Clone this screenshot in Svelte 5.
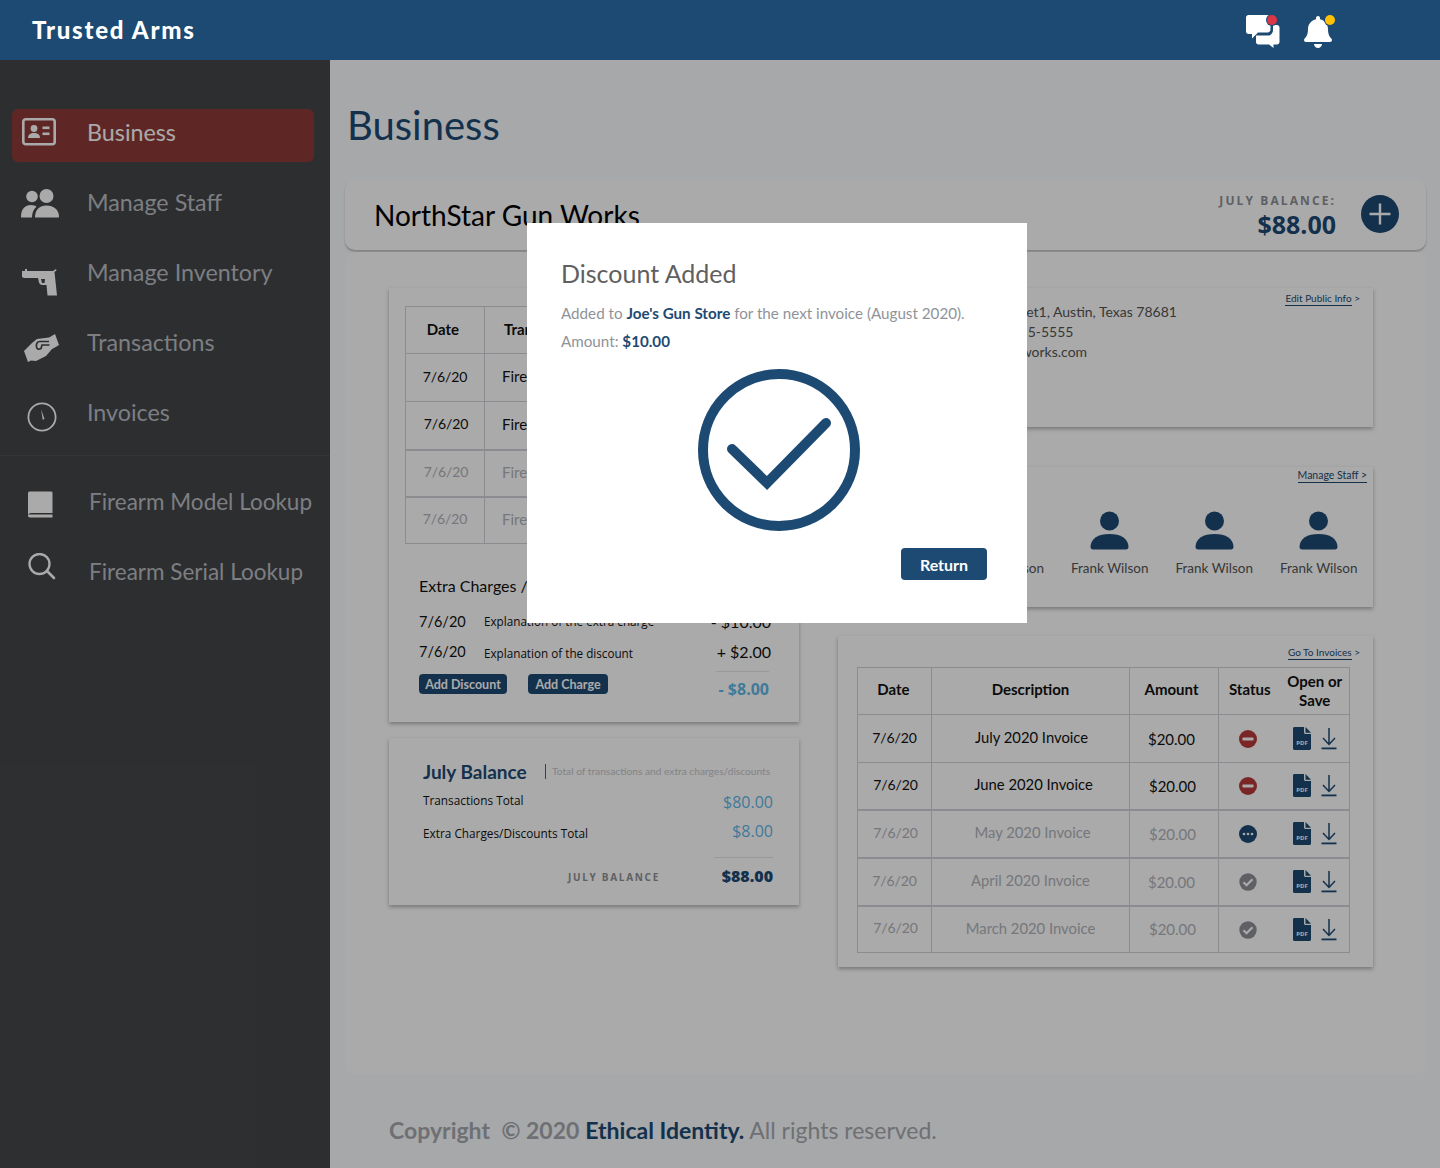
<script>
  const nav = [
    { label: 'Business', icon: 'card', active: true },
    { label: 'Manage Staff', icon: 'users' },
    { label: 'Manage Inventory', icon: 'gun' },
    { label: 'Transactions', icon: 'hands' },
    { label: 'Invoices', icon: 'clock' }
  ];
  const lookup = [
    { label: 'Firearm Model Lookup', icon: 'book' },
    { label: 'Firearm Serial Lookup', icon: 'search' }
  ];
  const tx = [
    { dx: 0, faded: false, thick: false },
    { dx: 2, faded: false, thick: false },
    { dx: 2, faded: true, thick: true },
    { dx: 0, faded: true, thick: true }
  ];
  const invoices = [
    { name: 'July 2020 Invoice', status: 'due', dd: 0, dn: 2, faded: false, thick: false },
    { name: 'June 2020 Invoice', status: 'due', dd: 2, dn: 6, faded: false, thick: false },
    { name: 'May 2020 Invoice', status: 'pending', dd: 2, dn: 4, faded: true, thick: true },
    { name: 'April 2020 Invoice', status: 'paid', dd: 0, dn: 0, faded: true, thick: true },
    { name: 'March 2020 Invoice', status: 'paid', dd: 2, dn: -4, faded: true, thick: true }
  ];
  const staff = [1, 2, 3, 4, 5];
</script>

{#snippet navIcon(kind)}
  {#if kind === 'card'}
    <svg class="ni i-card" viewBox="0 0 34 28"><rect x="1.300" y="1.300" width="31.400" height="25" rx="2.500" fill="none" stroke="#fff" stroke-width="2.600"/><circle cx="12" cy="10.500" r="3.400" fill="#fff"/><path d="M6 20c0-3.600 2.600-5 6-5s6 1.400 6 5z" fill="#fff"/><rect x="20.500" y="8.500" width="7" height="2.600" fill="#fff"/><rect x="20.500" y="14.500" width="7" height="2.600" fill="#fff"/></svg>
  {:else if kind === 'users'}
    <svg class="ni i-users" viewBox="0 0 38 30"><circle cx="11" cy="7.500" r="5.800" fill="#fff"/><circle cx="25.500" cy="7" r="7" fill="#fff"/><path d="M0 28c0-8 4-12 10-12 2.500 0 4.500.8 5.500 1.800C12.500 20 11 24 11 28.600H1.500C.5 28.600 0 28.400 0 28z" fill="#fff"/><path d="M14 28.600c0-8 4.500-12 11.500-12S38 20.600 38 28c0 .4-.6.6-1.500.6z" fill="#fff"/></svg>
  {:else if kind === 'gun'}
    <svg class="ni i-gun" viewBox="0 0 36 28"><path d="M0 3h3V1h2v2h26l3-2 .5 1.500-2 1.500L35 27.500H25.500L24.500 17h-4c-2 0-3-1-3.500-2.500L16 10H2L0 9z" fill="#fff"/><path d="M19 11h4l-.5 4H20z" fill="#444649"/></svg>
  {:else if kind === 'hands'}
    <svg class="ni i-hands" viewBox="0 0 35 28"><path d="M0 17L8 9l5-4 12-1.500L26 3l5-3 4 11-5 3-2 1-6 7-10 5-5-.5L4 28z" fill="#fff"/><path d="M25 7.500h-9c-3 0-4 2.500-3.500 5.500.5 2.500 2.500 2.500 4.500 1.500l1-3.500h7.500" fill="none" stroke="#444649" stroke-width="1.700"/></svg>
  {:else if kind === 'clock'}
    <svg class="ni i-clock" viewBox="0 0 30 30"><circle cx="15" cy="15" r="13.600" fill="none" stroke="#fff" stroke-width="1.800"/><path d="M14.200 7.500l3.300 9.500-1.800.8z" fill="#fff"/></svg>
  {:else if kind === 'book'}
    <svg class="ni i-book" viewBox="0 0 28 28"><path d="M2.500.5H24c1 0 1.500.5 1.500 1.500v20H4.500c-1.200 0-2 .4-2.600 1L1 24V2.500C1 1.200 1.500.5 2.500.5z" fill="#fff"/><path d="M1 24.500c0-.6.800-1 2-1h22.500v3H3.500C2 26.500 1 26 1 24.500z" fill="#fff"/></svg>
  {:else}
    <svg class="ni i-search" viewBox="0 0 28 28"><circle cx="11.500" cy="11" r="10" fill="none" stroke="#fff" stroke-width="2.300"/><path d="M19 18l7 7" stroke="#fff" stroke-width="2.600" stroke-linecap="round"/></svg>
  {/if}
{/snippet}

{#snippet statusIcon(s)}
  <svg class="st" viewBox="0 0 18 18">
    {#if s === 'due'}
      <circle cx="9" cy="9" r="9" fill="#b83a3a"/><rect x="3.500" y="7.600" width="11" height="2.800" rx=".6" fill="#fff"/>
    {:else if s === 'pending'}
      <circle cx="9" cy="9" r="9" fill="#1d4a73"/><circle cx="5" cy="9" r="1.300" fill="#fff"/><circle cx="9" cy="9" r="1.300" fill="#fff"/><circle cx="13" cy="9" r="1.300" fill="#fff"/>
    {:else}
      <circle cx="9" cy="9" r="8.700" fill="#8d9096"/><path d="M4.500 9.200l3 3 6-6" fill="none" stroke="#fff" stroke-width="2.300"/>
    {/if}
  </svg>
{/snippet}

{#snippet fileIcons()}
  <div class="files">
    <svg class="pdf" viewBox="0 0 18 23"><path d="M1.500 0H11v5.500c0 .8.700 1.500 1.500 1.500H18v14.500c0 .8-.7 1.500-1.500 1.500h-15C.7 23 0 22.300 0 21.500v-20C0 .7.700 0 1.500 0z" fill="#1d4a73"/><path d="M12.500 0L18 5.700h-5.500z" fill="#1d4a73"/><text x="9" y="18" class="pdft">PDF</text></svg>
    <svg class="dl" viewBox="0 0 16 23"><path d="M8 1v16M2 11l6 6.500 6-6.500" fill="none" stroke="#1d4a73" stroke-width="1.500"/><rect x="0.500" y="20.500" width="15" height="1.800" fill="#1d4a73"/></svg>
  </div>
{/snippet}

<div class="root">
  <header class="top">
    <div class="brand">Trusted Arms</div>
    <div class="top-icons">
      <div class="ti chat">
        <svg viewBox="0 0 34 33" width="34" height="33"><path d="M2.500 0H22c1.400 0 2.500 1.100 2.500 2.500V14c0 2-1 3.500-3 3.500H12l-6 6V19H2.500C1.100 19 0 17.900 0 16.500V2.500C0 1.100 1.100 0 2.500 0z" fill="#fff"/><path d="M27 10h4c1.400 0 2.500 1.100 2.500 2.500V27c0 1.400-1.100 2.500-2.500 2.500h-3.500V33L23 29.500H12.500C11 29.500 10 28.400 10 27v-6.500h12c3 0 5-2.500 5-5.500z" fill="#fff"/></svg>
        <span class="dot red"></span>
      </div>
      <div class="ti bell">
        <svg viewBox="0 0 448 512" width="30" height="32"><path fill="#fff" d="M224 512c35.320 0 63.970-28.650 63.970-64H160.030c0 35.350 28.650 64 63.970 64zm215.390-149.710c-19.320-20.760-55.470-51.990-55.470-154.290 0-77.700-54.480-139.900-127.940-155.160V32c0-17.670-14.320-32-31.980-32s-31.980 14.330-31.980 32v20.840C118.560 68.100 64.080 130.300 64.080 208c0 102.300-36.150 133.530-55.470 154.290-6 6.450-8.660 14.160-8.610 21.710.11 16.400 12.980 32 32.100 32h383.800c19.120 0 32-15.600 32.100-32 .05-7.550-2.610-15.270-8.610-21.710z"/></svg>
        <span class="dot amber"></span>
      </div>
    </div>
  </header>

  <div class="shell">
    <aside class="side">
      <nav class="nav-main">
        {#each nav as n}
          <div class="nav-item" class:active={n.active}>
            <span class="nav-ico">{@render navIcon(n.icon)}</span>
            <span class="nav-label">{n.label}</span>
          </div>
        {/each}
      </nav>
      <nav class="nav-look">
        {#each lookup as n}
          <div class="nav-item look">
            <span class="nav-ico">{@render navIcon(n.icon)}</span>
            <span class="nav-label">{n.label}</span>
          </div>
        {/each}
      </nav>
    </aside>

    <main class="main">
      <h1 class="title">Business</h1>
      <section class="biz-head">
        <h2 class="biz-name">NorthStar Gun Works</h2>
        <div class="biz-bal">
          <div class="bal-cap">JULY BALANCE:</div>
          <div class="bal-val">$88.00</div>
        </div>
        <div class="plus"><svg viewBox="0 0 38 38" width="38" height="38"><circle cx="19" cy="19" r="19" fill="#1d4a73"/><path d="M19 8.500v21M8.500 19h21" stroke="#fff" stroke-width="2.400"/></svg></div>
      </section>

      <section class="biz-body">
        <div class="col-left">
          <div class="card tx-card">
            <table class="grid tx-table">
              <colgroup><col class="c-d" /><col /></colgroup>
              <thead><tr><th>Date</th><th>Transaction</th></tr></thead>
              <tbody>
                {#each tx as r}
                  <tr class:faded={r.faded} class:thick={r.thick}>
                    <td class="dt" style="padding-left:{r.dx}px">7/6/20</td>
                    <td>Firearm Transfer</td>
                  </tr>
                {/each}
              </tbody>
            </table>
            <div class="extra-title">Extra Charges / Discounts</div>
            <div class="extra-row one"><span class="ex-date">7/6/20</span><span class="ex-desc">Explanation of the extra charge</span><span class="ex-amt">- $10.00</span></div>
            <div class="extra-row two"><span class="ex-date">7/6/20</span><span class="ex-desc">Explanation of the discount</span><span class="ex-amt">+ $2.00</span></div>
            <div class="extra-foot">
              <button class="mini">Add Discount</button>
              <button class="mini second">Add Charge</button>
              <div class="ex-total">- $8.00</div>
            </div>
          </div>
          <div class="card bal-card">
            <div class="bal-head">
              <span class="bal-title">July Balance</span>
              <span class="bal-note">Total of transactions and extra charges/discounts</span>
            </div>
            <div class="bal-row r1"><span>Transactions Total</span><b>$80.00</b></div>
            <div class="bal-row r2"><span>Extra Charges/Discounts Total</span><b>$8.00</b></div>
            <div class="bal-sum">
              <span class="sum-cap">JULY BALANCE</span>
              <span class="sum-val">$88.00</span>
            </div>
          </div>
        </div>

        <div class="col-right">
          <div class="card info-card">
            <a class="lnk" href="#top"><span class="u">Edit Public Info</span> &gt;</a>
            <div class="info-lines">
              <div>2 Street1, Austin, Texas 78681</div>
              <div>55-555-5555</div>
              <div>ngunworks.com</div>
            </div>
          </div>
          <div class="card staff-card">
            <a class="lnk" href="#top"><span class="u">Manage Staff &gt;</span></a>
            <div class="staff-row">
              {#each staff as s}
                <div class="person">
                  <svg viewBox="0 0 39 39" width="39" height="39"><circle cx="19.500" cy="10" r="9.500" fill="#1d4a73"/><path d="M0.500 36c0-8.500 8-13 19-13s19 4.500 19 13c0 1.600-1 2.500-2.500 2.500H3C1.500 38.500.5 37.600.5 36z" fill="#1d4a73"/></svg>
                  <span>Frank Wilson</span>
                </div>
              {/each}
            </div>
          </div>
          <div class="card inv-card">
            <a class="lnk" href="#top"><span class="u">Go To Invoices</span> &gt;</a>
            <table class="grid inv-table">
              <colgroup><col class="i1"/><col class="i2"/><col class="i3"/><col class="i4"/><col class="i5"/></colgroup>
              <thead>
                <tr><th>Date</th><th>Description</th><th class="amt">Amount</th><th class="nr">Status</th><th class="nl">Open or<br/>Save</th></tr>
              </thead>
              <tbody>
                {#each invoices as r}
                  <tr class:faded={r.faded} class:thick={r.thick}>
                    <td class="dt" style="padding-left:{r.dd}px">7/6/20</td>
                    <td class="nm" style="padding-left:{r.dn}px">{r.name}</td>
                    <td class="amt" style="padding-left:{r.dd}px">$20.00</td>
                    <td class="nr icon-cell">{@render statusIcon(r.status)}</td>
                    <td class="nl icon-cell">{@render fileIcons()}</td>
                  </tr>
                {/each}
              </tbody>
            </table>
          </div>
        </div>
      </section>

      <footer class="foot"><b class="g">Copyright</b> <span class="s">&nbsp;© 2020</span> <b class="e">Ethical Identity.</b> <span class="r">All rights reserved.</span></footer>
    </main>
  </div>

  <div class="veil">
    <div class="modal">
      <h3>Discount Added</h3>
      <p class="l1">Added to <b>Joe's Gun Store</b> for the next invoice (August 2020).</p>
      <p class="l2">Amount: <b>$10.00</b></p>
      <div class="check">
        <svg viewBox="0 0 162 162" width="162" height="162"><circle cx="81" cy="81" r="76" fill="none" stroke="#1d4a73" stroke-width="10"/><path d="M34 80l35 34 59-60" fill="none" stroke="#1d4a73" stroke-width="10" stroke-linecap="round" stroke-linejoin="miter"/></svg>
      </div>
      <div class="m-foot"><button class="ret">Return</button></div>
    </div>
  </div>
</div>

<style>
  :global(body) { margin: 0; }
  .root { position: relative; width: 1440px; height: 1168px; overflow: hidden; font-family: Lato, "Open Sans", sans-serif; background: #fbfcfe; color: #111; }
  .top { position: relative; z-index: 3; height: 60px; background: #1c4a73; display: flex; align-items: center; justify-content: space-between; color: #fff; }
  .brand { margin-left: 32px; margin-top: -2px; font-size: 24px; font-weight: 900; letter-spacing: 1.75px; }
  .top-icons { display: flex; align-self: flex-start; margin-right: 107px; align-items: flex-start; }
  .ti { position: relative; }
  .chat { width: 34px; height: 33px; margin-right: 23px; margin-top: 15px; }
  .bell { width: 30px; height: 32px; margin-top: 16px; }
  .ti svg { display: block; }
  .dot { position: absolute; width: 10px; height: 10px; border-radius: 50%; }
  .dot.red { background: #dc3545; right: 3px; top: 0; box-shadow: 0 0 0 1px #1c4a73; }
  .dot.amber { background: #ffc107; right: -2px; top: -1px; box-shadow: 0 0 0 1px #1c4a73; }

  .shell { display: flex; height: 1108px; }
  .side { width: 330px; flex: none; background: #444649; padding-top: 49px; box-sizing: border-box; }
  .nav-main { padding: 0 16px 0 12px; border-bottom: 1.500px solid #4c5058; height: 346.500px; box-sizing: border-box; }
  .nav-item { display: flex; align-items: center; height: 53px; margin-bottom: 17px; color: #bcbec4; font-size: 23.300px; border-radius: 6px; }
  .nav-item.active { background: #8e3b38; color: #fff; }
  .nav-ico { width: 75px; flex: none; display: flex; align-items: center; padding-left: 9px; box-sizing: border-box; }
  .nav-label { padding-bottom: 7px; white-space: nowrap; }
  .ni { display: block; flex: none; }
  .i-card { width: 34px; height: 28px; margin: -8px 0 0 1px; }
  .i-users { width: 38px; height: 30px; margin: -4px 0 0 0; }
  .i-gun { width: 36px; height: 28px; margin: 13px 0 0 1px; }
  .i-hands { width: 35px; height: 28px; margin: 5px 0 0 3px; }
  .i-clock { width: 30px; height: 30px; margin: 2px 0 0 6px; }
  .i-book { width: 28px; height: 28px; margin: 0 0 0 6px; }
  .i-search { width: 28px; height: 28px; margin: -16px 0 0 7px; }
  .nav-look { padding: 22.500px 0 0 12px; }
  .look .nav-ico { width: 77px; }
  .look { font-size: 22.500px; }

  .main { flex: 1; min-width: 0; padding: 0 14px 0 15px; }
  .title { margin: 41px 0 0 2px; height: 79px; font-size: 40px; line-height: 48px; font-weight: 400; color: #1d4a73; }
  .biz-head { height: 70px; background: #fff; border-radius: 10px; box-shadow: 0 2px 2px rgba(0,0,0,.22); display: flex; align-items: center; padding: 0 27px 0 29px; }
  .biz-name { margin: 0; font-size: 28px; line-height: 34px; font-weight: 400; flex: 1; color: #000; padding-bottom: 1px; }
  .biz-bal { text-align: right; font-family: "Open Sans", sans-serif; margin-right: 25px; }
  .bal-cap { font-size: 12px; font-weight: 700; letter-spacing: 2.100px; color: #8e9096; line-height: 16px; margin-top: 2px; margin-bottom: 0; }
  .bal-val { font-size: 25px; font-weight: 700; color: #1d4a73; line-height: 31px; }
  .plus { height: 38px; margin-top: -2px; }

  .biz-body { margin-top: 2px; height: 822px; box-sizing: border-box; background: #fff; border-radius: 10px; padding: 36px 0 0 44px; display: flex; gap: 39px; }
  .col-left { width: 410px; flex: none; display: flex; flex-direction: column; gap: 16px; }
  .col-right { width: 535px; flex: none; display: flex; flex-direction: column; }
  .card { position: relative; background: #fff; box-shadow: 0 2px 4px rgba(0,0,0,.3); box-sizing: border-box; }

  .tx-card { height: 434px; padding: 18px 16px 0 16px; }
  .grid { border-collapse: collapse; table-layout: fixed; border: 1px solid #d0d3d9; font-size: 15px; text-align: center; }
  .grid th, .grid td { border: 1px solid #d0d3d9; padding: 0 0 3px; font-weight: 400; }
  .grid th { font-weight: 700; }
  .grid .dt { font-size: 14px; letter-spacing: -.1px; }
  .grid tr.thick td { border-top: 2px solid #d0d3d9; }
  .grid tr.faded td { color: #b1b3b9; }
  .grid .nr { border-right: 0; }
  .grid .nl { border-left: 0; }
  .tx-table { width: 378px; }
  .tx-table .c-d { width: 79px; }
  .tx-table thead tr { height: 47px; }
  .tx-table tbody tr { height: 48px; }
  .tx-table tbody tr.thick { height: 47px; }
  .tx-table th:first-child { padding-right: 4px; }
  .tx-table td:nth-child(2), .tx-table th:nth-child(2) { text-align: left; padding-left: 17px; }
  .tx-table th:nth-child(2) { padding-left: 19px; }

  .extra-title { margin: 32px 0 0 14px; font-size: 16px; line-height: 20px; }
  .extra-row { display: flex; margin-left: 14px; margin-right: 12px; align-items: center; height: 20px; }
  .extra-row.one { margin-top: 15px; }
  .extra-row.two { margin-top: 10px; }
  .ex-date { width: 65px; font-size: 14.500px; }
  .ex-desc { flex: 1; font-family: "Open Sans", sans-serif; font-size: 11.700px; }
  .two .ex-desc { padding-top: 3px; }
  .ex-amt { font-size: 16px; }
  .extra-foot { display: flex; align-items: center; margin: 8px 14px 0 14px; }
  .mini { height: 20px; border: 0; border-radius: 4px; background: #1d4a73; color: #fff; font: 700 12.500px Lato, sans-serif; padding: 0; width: 88px; }
  .mini.second { width: 80px; margin-left: 21px; }
  .ex-total { margin-left: auto; width: 53px; border-top: 1px solid #e6e6e6; text-align: right; font-family: "Open Sans", sans-serif; font-size: 16px; font-weight: 700; color: #5fb8e8; padding-top: 7px; margin-top: 2px; line-height: 20px; white-space: nowrap; }

  .bal-card { height: 167px; padding: 21px 26px 0 34px; }
  .bal-head { display: flex; align-items: center; height: 24px; }
  .bal-title { font-size: 19px; font-weight: 700; color: #1d4a73; width: 122px; }
  .bal-note { font-size: 10.200px; color: #c4c6ca; border-left: 1.500px solid #b83a3a; padding-left: 6px; line-height: 15px; margin-top: 1px; white-space: nowrap; }
  .bal-row { display: flex; justify-content: space-between; font-family: "Open Sans", sans-serif; font-size: 11.800px; align-items: center; height: 20px; }
  .bal-row.r1 { margin-top: 7px; }
  .bal-row.r2 { margin-top: 11px; }
  .bal-row.r1 b { padding-top: 3px; }
  .bal-row.r2 span { padding-top: 4px; }
  .bal-row b { font-weight: 400; font-size: 16px; color: #5fb8e8; }
  .bal-sum { display: flex; justify-content: flex-end; align-items: center; margin-top: 16px; font-family: "Open Sans", sans-serif; }
  .sum-cap { font-size: 10px; font-weight: 700; letter-spacing: 1.700px; color: #8e9096; margin-right: 54px; padding-top: 9px; }
  .sum-val { width: 59px; font-size: 16px; font-weight: 800; color: #1d4a73; text-align: right; border-top: 1px solid #e6e6e6; padding-top: 7px; line-height: 22px; }

  .lnk { position: absolute; top: 4px; right: 13px; font-size: 10px; line-height: 13px; color: #1d4a73; text-decoration: none; white-space: nowrap; }
  .lnk .u { border-bottom: 1px solid #1d4a73; display: inline-block; }
  .info-card { height: 139px; padding: 14px 0 0 152px; }
  .info-lines { font-size: 14px; line-height: 20px; color: #555; white-space: nowrap; }
  .staff-card { height: 140px; margin-top: 40px; display: flex; justify-content: flex-end; padding: 44px 2px 0 0; }
  .staff-card .lnk { right: 6px; top: 2px; font-size: 10.500px; }
  .staff-row { display: flex; }
  .person { width: 104.500px; display: flex; flex-direction: column; align-items: center; gap: 10px; font-size: 13.500px; color: #555; white-space: nowrap; }
  .person svg { display: block; }
  .inv-card { height: 331px; margin-top: 29px; padding: 31px 0 0 19px; }
  .inv-card .lnk { top: 10px; }
  .inv-table { width: 492px; }
  .i1 { width: 74px; } .i2 { width: 198px; } .i3 { width: 89px; } .i4 { width: 62px; } .i5 { width: 69px; }
  .inv-table thead tr { height: 47px; }
  .inv-table tbody tr { height: 48px; }
  .inv-table tbody tr:nth-child(2), .inv-table tbody tr:nth-child(5) { height: 47px; }
  .inv-table th { line-height: 19px; }
  .inv-table th:first-child { padding-right: 2px; }
  .inv-table th.nl { padding-bottom: 0; }
  .grid .nm { font-size: 14.800px; }
  .grid .amt { padding-right: 5px; }
  .grid td.amt { padding-bottom: 0; }
  .grid .icon-cell { vertical-align: middle; padding: 0; }
  .st { display: block; width: 18px; height: 18px; margin: 1px auto 0 20px; }
  .files { display: flex; gap: 10px; margin-left: 12px; align-items: center; }
  .pdf { width: 18px; height: 23px; display: block; }
  .dl { width: 16px; height: 23px; display: block; }
  .pdft { font: 700 6px "Open Sans", sans-serif; fill: #fff; text-anchor: middle; }

  .foot { margin: 42px 0 0 44px; font-size: 23px; line-height: 28px; color: #a6a9af; white-space: nowrap; }
  .foot .g { font-weight: 700; }
  .foot .s { font-weight: 700; }
  .foot .e { color: #1d4a73; font-weight: 700; }

  .veil { position: absolute; inset: 60px 0 0 0; z-index: 2; background: rgba(0,0,0,.335); padding: 163px 0 0 527px; box-sizing: border-box; }
  .modal { width: 500px; height: 400px; background: #fff; box-sizing: border-box; padding: 34px 40px 0 34px; }
  .modal h3 { margin: 0; font-size: 25px; line-height: 32px; font-weight: 400; color: #606060; }
  .modal p { margin: 0; font-size: 15.200px; line-height: 22px; color: #8f9399; }
  .modal p b { color: #1d4a73; font-weight: 700; }
  .l1 { margin-top: 13px !important; white-space: nowrap; }
  .l2 { margin-top: 6px !important; }
  .check { margin: 17px 0 0 137px; height: 162px; }
  .check svg { display: block; }
  .m-foot { display: flex; justify-content: flex-end; margin-top: 17px; }
  .ret { width: 86px; height: 32px; border: 0; border-radius: 4px; background: #1d4a73; color: #fff; font: 700 16px Lato, sans-serif; }
</style>
